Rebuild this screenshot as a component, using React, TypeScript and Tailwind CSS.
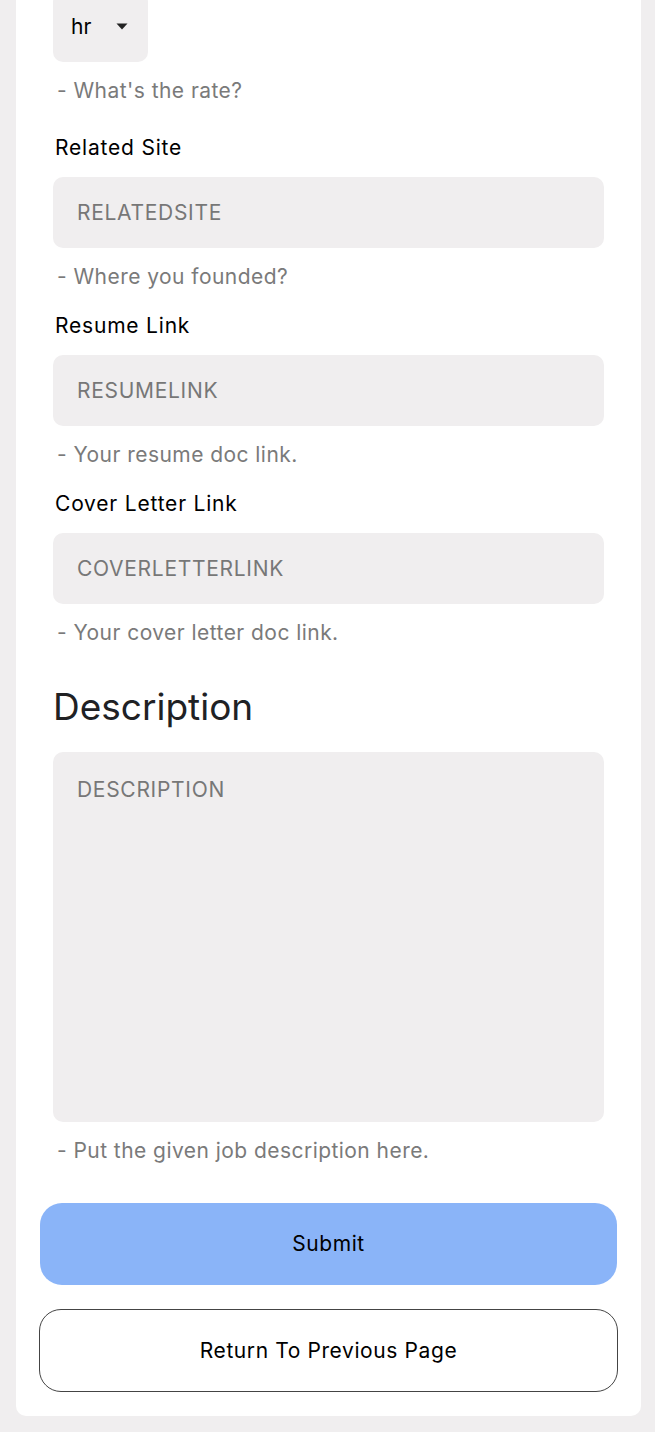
import React from "react";

const font = { fontFamily: "Inter, 'Noto Sans', sans-serif" };

function Field({ label, placeholder, helper }: { label: string; placeholder: string; helper: string }) {
  return (
    <div className="flex flex-col">
      <div className="text-[21px] leading-[28px] h-[28px] pl-[2px] tracking-[0.8px] text-black">{label}</div>
      <div className="mt-[15px] h-[71px] rounded-[10px] bg-[#f0eeef] flex items-center pl-[24px] text-[21px] tracking-[0.7px] text-[#777]">
        {placeholder}
      </div>
      <div className="mt-[15px] text-[21px] leading-[28px] h-[28px] pl-[4px] tracking-[0.45px] text-[#7a7a7a]">{helper}</div>
    </div>
  );
}

export default function App() {
  return (
    <div className="min-h-screen bg-[#f0eeef] pl-[16px] pr-[14px] pb-[15px] overflow-hidden" style={font}>
      <div className="bg-white rounded-b-[10px] px-[24px] pb-[24px]">
        <div className="px-[13px] flex flex-col">
          <div className="-mt-[8px] w-[95px] h-[70px] rounded-[10px] bg-[#f0eeef] flex items-center pl-[18px] text-[21px] text-black">
            <span>hr</span>
            <svg className="ml-[25px]" width="12" height="8" viewBox="0 0 12 8">
              <path d="M0.5 0.5 L11.5 0.5 L6 6.5 Z" fill="#222" />
            </svg>
          </div>
          <div className="mt-[15px] text-[21px] leading-[28px] h-[28px] pl-[4px] tracking-[0.45px] text-[#7a7a7a]">- What's the rate?</div>
          <div className="mt-[29px] flex flex-col gap-[21px]">
            <Field label="Related Site" placeholder="RELATEDSITE" helper="- Where you founded?" />
            <Field label="Resume Link" placeholder="RESUMELINK" helper="- Your resume doc link." />
            <Field label="Cover Letter Link" placeholder="COVERLETTERLINK" helper="- Your cover letter doc link." />
          </div>
          <div className="mt-[38px] text-[37px] leading-[44px] text-[#202124]">Description</div>
          <div className="mt-[23px] h-[370px] rounded-[10px] bg-[#f0eeef] pl-[24px] pt-[22px] text-[21px] tracking-[0.7px] text-[#777]">
            DESCRIPTION
          </div>
          <div className="mt-[15px] text-[21px] leading-[28px] h-[28px] pl-[4px] tracking-[0.45px] text-[#7a7a7a]">
            - Put the given job description here.
          </div>
        </div>
        <div className="mt-[38px] flex flex-col gap-[24px]">
          <button className="h-[82px] rounded-[22px] bg-[#8ab4f8] text-[21px] tracking-[0.6px] text-black">Submit</button>
          <button className="-mx-[1px] h-[83px] rounded-[22px] border border-[#444] bg-white text-[21px] tracking-[0.6px] text-black">
            Return To Previous Page
          </button>
        </div>
      </div>
    </div>
  );
}
